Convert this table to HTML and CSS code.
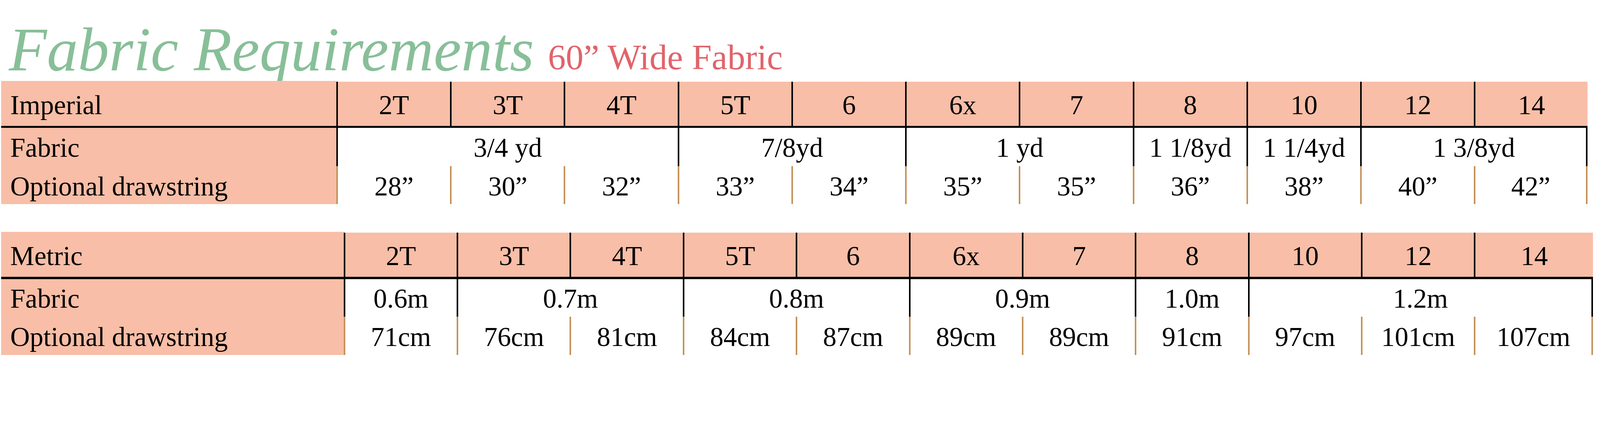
FILE: index.html
```html
<!DOCTYPE html>
<html lang="en">
<head>
<meta charset="utf-8">
<title>Fabric Requirements</title>
<link rel="stylesheet" href="styles.css">
</head>
<body>
<div class="page">
  <header class="title">
    <h1 class="title-main">Fabric Requirements</h1>
    <span class="title-sub">60” Wide Fabric</span>
  </header>

  <section class="chart imperial">
    <div class="cell label head">Imperial</div>
    <div class="cell size">2T</div>
    <div class="cell size">3T</div>
    <div class="cell size">4T</div>
    <div class="cell size">5T</div>
    <div class="cell size">6</div>
    <div class="cell size">6x</div>
    <div class="cell size">7</div>
    <div class="cell size">8</div>
    <div class="cell size">10</div>
    <div class="cell size">12</div>
    <div class="cell size">14</div>
    <div class="rule"></div>
    <div class="cell label fab">Fabric</div>
    <div class="cell amount span-3">3/4 yd</div>
    <div class="cell amount span-2">7/8yd</div>
    <div class="cell amount span-2">1 yd</div>
    <div class="cell amount">1 1/8yd</div>
    <div class="cell amount">1 1/4yd</div>
    <div class="cell amount span-2 last">1 3/8yd</div>
    <div class="cell label draw">Optional drawstring</div>
    <div class="cell length">28”</div>
    <div class="cell length">30”</div>
    <div class="cell length">32”</div>
    <div class="cell length">33”</div>
    <div class="cell length">34”</div>
    <div class="cell length">35”</div>
    <div class="cell length">35”</div>
    <div class="cell length">36”</div>
    <div class="cell length">38”</div>
    <div class="cell length">40”</div>
    <div class="cell length last">42”</div>
  </section>

  <section class="chart metric">
    <div class="cell label head">Metric</div>
    <div class="cell size">2T</div>
    <div class="cell size">3T</div>
    <div class="cell size">4T</div>
    <div class="cell size">5T</div>
    <div class="cell size">6</div>
    <div class="cell size">6x</div>
    <div class="cell size">7</div>
    <div class="cell size">8</div>
    <div class="cell size">10</div>
    <div class="cell size">12</div>
    <div class="cell size">14</div>
    <div class="rule"></div>
    <div class="cell label fab">Fabric</div>
    <div class="cell amount">0.6m</div>
    <div class="cell amount span-2">0.7m</div>
    <div class="cell amount span-2">0.8m</div>
    <div class="cell amount span-2">0.9m</div>
    <div class="cell amount">1.0m</div>
    <div class="cell amount span-3 last">1.2m</div>
    <div class="cell label draw">Optional drawstring</div>
    <div class="cell length">71cm</div>
    <div class="cell length">76cm</div>
    <div class="cell length">81cm</div>
    <div class="cell length">84cm</div>
    <div class="cell length">87cm</div>
    <div class="cell length">89cm</div>
    <div class="cell length">89cm</div>
    <div class="cell length">91cm</div>
    <div class="cell length">97cm</div>
    <div class="cell length">101cm</div>
    <div class="cell length last">107cm</div>
  </section>
</div>
</body>
</html>
```

FILE: styles.css
```css
:root {
  --u: calc(100vw / 4367);
}

html, body {
  margin: 0;
  padding: 0;
  background: #ffffff;
  overflow: hidden;
}

.page {
  width: 100%;
  height: calc(1128 * var(--u));
  font-family: "Liberation Serif", "Times New Roman", serif;
  color: #000000;
  overflow: hidden;
}

.title {
  height: calc(221 * var(--u));
  box-sizing: border-box;
  padding: calc(50 * var(--u)) 0 0 calc(24 * var(--u));
  display: flex;
  align-items: baseline;
}

.title-main {
  margin: 0;
  font-family: "Liberation Serif", serif;
  font-style: italic;
  font-weight: normal;
  font-size: calc(170 * var(--u));
  line-height: 1;
  color: #88bf98;
}

.title-sub {
  margin-left: calc(38 * var(--u));
  font-size: calc(97 * var(--u));
  line-height: 1;
  color: #e0646a;
  position: relative;
  top: calc(-3 * var(--u));
}

.chart {
  display: grid;
  margin-left: calc(3 * var(--u));
  font-size: calc(74 * var(--u));
  line-height: 1;
}

.imperial {
  grid-template-columns: calc(915 * var(--u)) repeat(11, calc(310.5 * var(--u)));
  grid-template-rows: calc(122 * var(--u)) calc(6 * var(--u)) calc(104 * var(--u)) calc(104 * var(--u));
}

.metric {
  margin-top: calc(75 * var(--u));
  grid-template-columns: calc(935 * var(--u)) repeat(10, calc(308.5 * var(--u))) calc(325 * var(--u));
  grid-template-rows: calc(123 * var(--u)) calc(6 * var(--u)) calc(103 * var(--u)) calc(104 * var(--u));
}

.cell {
  box-sizing: border-box;
  display: flex;
  justify-content: center;
  align-items: flex-start;
  white-space: nowrap;
}

.label {
  background: #f8bea7;
  justify-content: flex-start;
  padding-left: calc(25 * var(--u));
}

.head {
  padding-top: calc(29 * var(--u));
}

.fab {
  padding-top: calc(17 * var(--u));
}

.draw {
  padding-top: calc(18 * var(--u));
}

.metric .fab {
  padding-top: calc(16 * var(--u));
}

.size {
  background: #f8bea7;
  border-left: calc(5 * var(--u)) solid #000000;
  padding-top: calc(27 * var(--u));
  margin-top: calc(2 * var(--u));
}

.rule {
  grid-column: 1 / -1;
  background: #000000;
}

.amount {
  background: #ffffff;
  border-left: calc(5 * var(--u)) solid #000000;
  padding-top: calc(17 * var(--u));
}

.metric .amount {
  padding-top: calc(16 * var(--u));
}

.amount.last {
  border-right: calc(5 * var(--u)) solid #000000;
}

.length {
  background: #ffffff;
  border-left: calc(5 * var(--u)) solid #c4925a;
  padding-top: calc(18 * var(--u));
}

.length.last {
  border-right: calc(5 * var(--u)) solid #c4925a;
}

.span-2 {
  grid-column: span 2;
}

.span-3 {
  grid-column: span 3;
}
```
